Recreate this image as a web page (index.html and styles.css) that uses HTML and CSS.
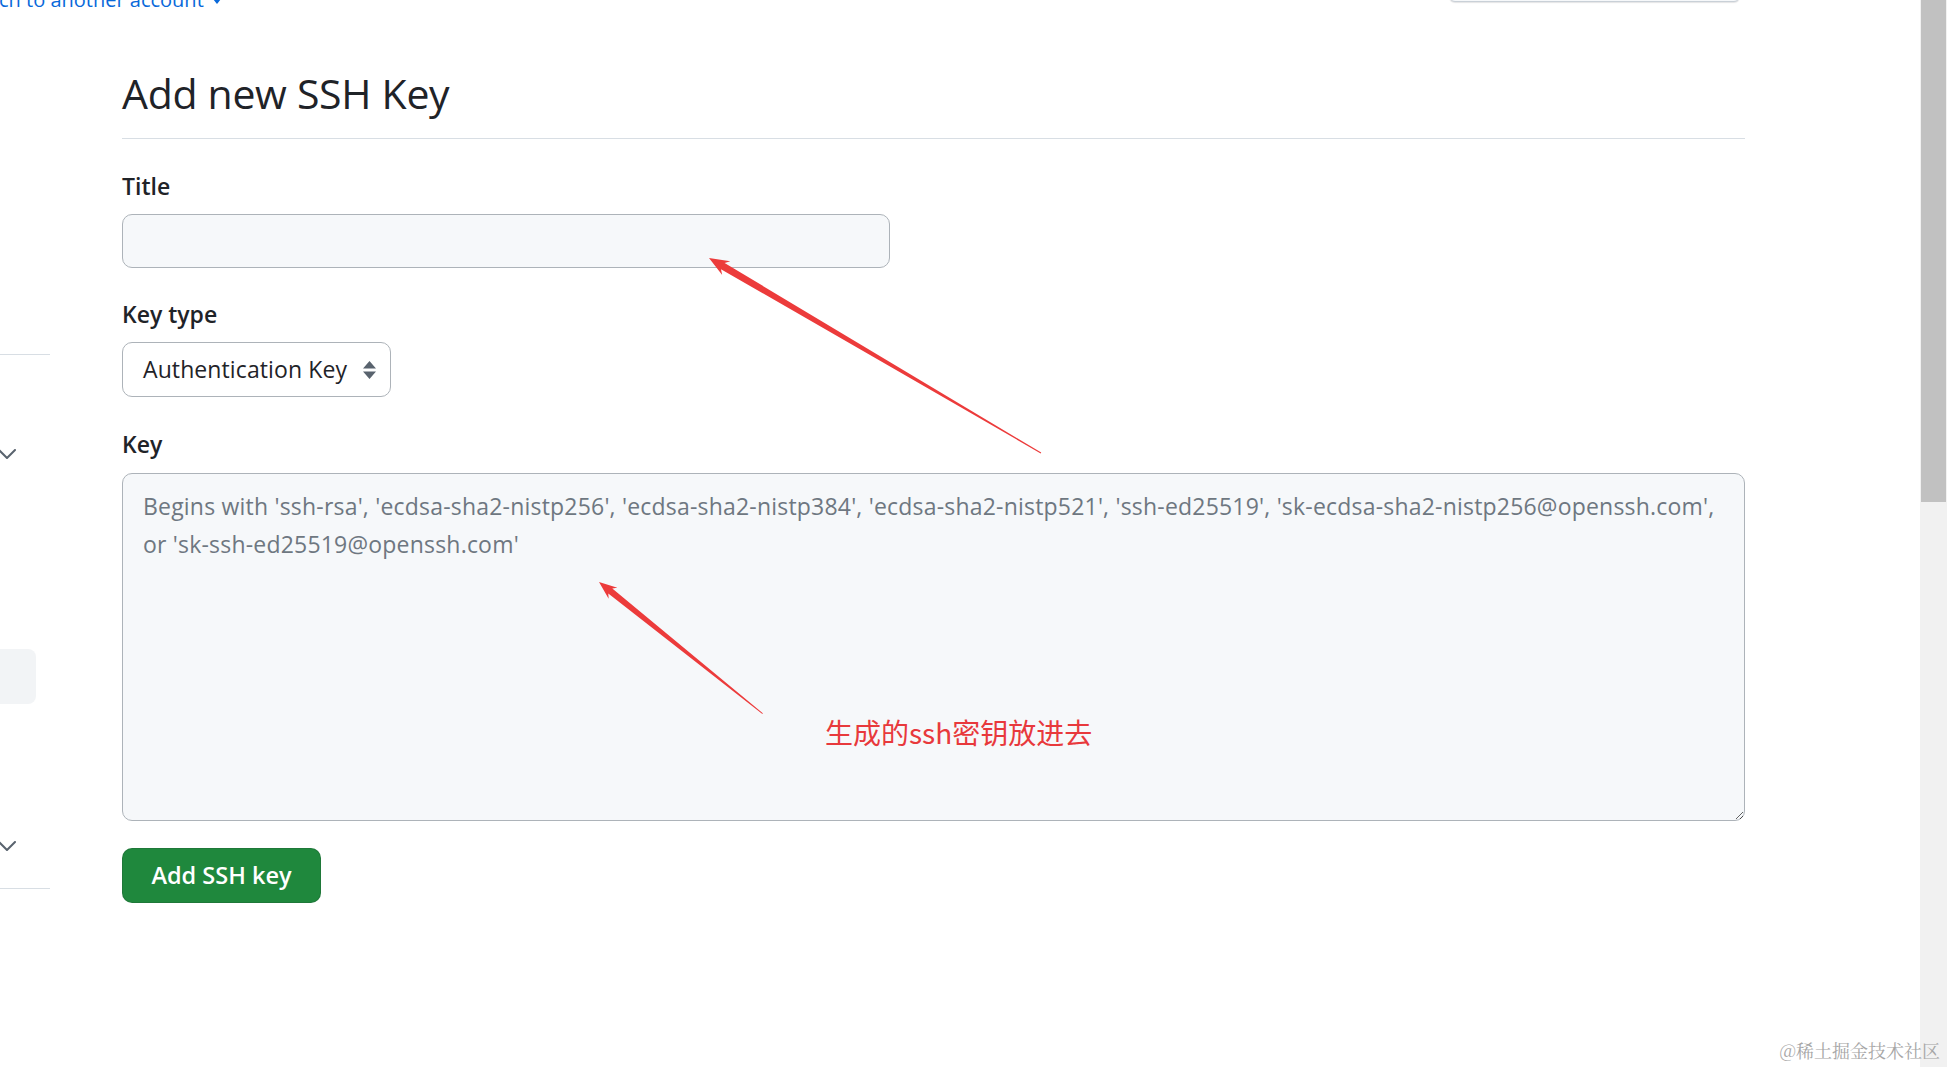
FILE: index.html
```html
<!DOCTYPE html>
<html lang="en">
<head>
<meta charset="utf-8">
<title>Add new SSH Key</title>
<link rel="stylesheet" href="styles.css">
</head>
<body>
<div class="viewport">
  <div class="page">
    <div class="topbar">
      <a class="account-switch" href="#">ch to another account<span class="caret"></span></a>
      <div class="profile-btn"></div>
    </div>
    <div class="layout">
      <aside class="sidebar">
        <div class="side-rule"></div>
        <svg class="side-chevron" width="18" height="10" viewBox="0 0 18 10"><polyline points="1,1 9,9 17,1" fill="none" stroke="#59636e" stroke-width="2" stroke-linecap="round" stroke-linejoin="round"/></svg>
        <div class="side-item"></div>
        <svg class="side-chevron second" width="18" height="10" viewBox="0 0 18 10"><polyline points="1,1 9,9 17,1" fill="none" stroke="#59636e" stroke-width="2" stroke-linecap="round" stroke-linejoin="round"/></svg>
        <div class="side-rule second"></div>
      </aside>
      <main class="main">
        <h2 class="subhead">Add new SSH Key</h2>
        <form class="ssh-form">
          <div class="form-group title-group">
            <label class="form-label" for="title">Title</label>
            <input class="form-control title-input" id="title" type="text">
          </div>
          <div class="form-group type-group">
            <label class="form-label">Key type</label>
            <div class="select">
              <span>Authentication Key</span>
              <svg width="15" height="18" viewBox="0 0 15 18"><path d="M7.5 0 L14 7.5 H1 Z M7.5 18 L14 10.5 H1 Z" fill="#59636e"/></svg>
            </div>
          </div>
          <div class="form-group key-group">
            <label class="form-label" for="key">Key</label>
            <textarea class="form-control key-input" id="key" placeholder="Begins with 'ssh-rsa', 'ecdsa-sha2-nistp256', 'ecdsa-sha2-nistp384', 'ecdsa-sha2-nistp521', 'ssh-ed25519', 'sk-ecdsa-sha2-nistp256@openssh.com',&#10;or 'sk-ssh-ed25519@openssh.com'"></textarea>
          </div>
          <button class="btn-primary" type="button">Add SSH key</button>
        </form>
      </main>
    </div>
  </div>
  <div class="scrollbar"><div class="scroll-thumb"></div></div>

  <svg class="annotations" width="1947" height="1067" viewBox="0 0 1947 1067">
    <g transform="translate(709 258) rotate(30.43)">
      <polygon points="0,0 20,-8 16,-3.6 385,-0.5 385,0.5 16,3.6 20,8" fill="#ec3b3b"/>
    </g>
    <g transform="translate(599 582) rotate(38.83)">
      <polygon points="0,0 18,-7 14.5,-3.2 210,-0.4 210,0.4 14.5,3.2 18,7" fill="#ec3b3b"/>
    </g>
  </svg>
  <div class="note">生成的ssh密钥放进去</div>
  <div class="watermark">@稀土掘金技术社区</div>
</div>
</body>
</html>
```

FILE: styles.css
```css
* {
  box-sizing: border-box;
}

html,
body {
  margin: 0;
  height: 100%;
}

body {
  font-family: "Segoe UI", "Open Sans", "Noto Sans", sans-serif;
  color: #1f2328;
  background: #ffffff;
  overflow: hidden;
}

.viewport {
  position: relative;
  display: flex;
  width: 1947px;
  height: 1067px;
  overflow: hidden;
}

.page {
  flex: 0 0 1920px;
  display: flex;
  flex-direction: column;
}

/* top strip (mostly scrolled away) */
.topbar {
  flex: none;
  height: 8px;
  display: flex;
  align-items: flex-end;
  justify-content: space-between;
  overflow: hidden;
}

.account-switch {
  font-size: 20px;
  line-height: 28px;
  color: #0969da;
  text-decoration: none;
  white-space: nowrap;
  margin-bottom: -6px;
  margin-left: -1px;
}

.caret {
  display: inline-block;
  width: 0;
  height: 0;
  margin-left: 9px;
  vertical-align: middle;
  border-top: 5px solid #0969da;
  border-left: 4px solid transparent;
  border-right: 4px solid transparent;
}

.profile-btn {
  width: 291px;
  height: 32px;
  margin-right: 180px;
  margin-bottom: 6px;
  border: 1px solid #c9d0d7;
  border-radius: 6px;
  background: #f6f8fa;
  box-shadow: 0 1px 1px rgba(31, 35, 40, 0.12);
}

.layout {
  flex: 1;
  display: flex;
}

/* left navigation (clipped) */
.sidebar {
  flex: none;
  width: 50px;
  display: flex;
  flex-direction: column;
}

.side-rule {
  height: 1px;
  background: #d8dee4;
  margin-top: 346px;
}

.side-rule.second {
  margin-top: 37px;
}

.side-chevron {
  display: block;
  margin-top: 94px;
  margin-left: -2px;
}

.side-chevron.second {
  margin-top: 137px;
}

.side-item {
  width: 36px;
  height: 55px;
  margin-top: 190px;
  background: #f2f4f6;
  border-radius: 0 8px 8px 0;
}

/* main column */
.main {
  flex: none;
  width: 1623px;
  margin-left: 72px;
}

.subhead {
  margin: 59px 0 0;
  padding-bottom: 19px;
  border-bottom: 1px solid #d8dee4;
  font-size: 41px;
  line-height: 52px;
  font-weight: 400;
  letter-spacing: -0.3px;
}

.form-group {
  display: flex;
  flex-direction: column;
  align-items: flex-start;
  margin-top: 30px;
}

.title-group {
  margin-top: 31px;
}

.key-group {
  margin-top: 31px;
}

.form-label {
  font-size: 23px;
  line-height: 32px;
  font-weight: 600;
}

.form-control {
  display: block;
  border: 1px solid #adb3b9;
  border-radius: 10px;
  background: #f6f8fa;
  font-family: inherit;
  font-size: 23px;
  color: #1f2328;
  outline: none;
}

.title-input {
  width: 768px;
  height: 54px;
  margin-top: 12px;
  padding: 0 18px;
}

.select {
  margin-top: 12px;
  width: 269px;
  height: 55px;
  padding: 0 13px 0 20px;
  display: flex;
  align-items: center;
  justify-content: space-between;
  border: 1px solid #adb3b9;
  border-radius: 10px;
  background: #ffffff;
  font-size: 23px;
  line-height: 31px;
  letter-spacing: 0.1px;
}

.key-input {
  margin-top: 13px;
  width: 1623px;
  height: 348px;
  padding: 13px 18px 13px 20px;
  line-height: 38px;
  letter-spacing: 0.2px;
  resize: vertical;
}

.key-input::placeholder {
  color: #6e7781;
  opacity: 1;
}

.btn-primary {
  display: block;
  margin-top: 27px;
  width: 199px;
  height: 55px;
  padding: 0;
  border: 1px solid rgba(31, 35, 40, 0.15);
  border-radius: 10px;
  background: #1f883d;
  color: #ffffff;
  font-family: inherit;
  font-size: 23.5px;
  font-weight: 600;
  line-height: 1;
}

/* fake scrollbar */
.scrollbar {
  flex: 0 0 27px;
  background: #f1f1f1;
}

.scroll-thumb {
  width: 25px;
  height: 502px;
  margin-left: 1px;
  background: #c1c1c1;
}

/* annotations over the screenshot */
.annotations {
  position: absolute;
  left: 0;
  top: 0;
  pointer-events: none;
}

.note {
  position: absolute;
  left: 825px;
  top: 715px;
  font-family: "Noto Sans CJK SC", sans-serif;
  font-size: 28px;
  line-height: 34px;
  color: #e8393c;
  white-space: nowrap;
}

.watermark {
  position: absolute;
  right: 7px;
  top: 1039px;
  font-family: "Noto Serif CJK SC", "Noto Sans CJK SC", serif;
  font-size: 18px;
  line-height: 22px;
  color: #a6a6a6;
  white-space: nowrap;
}
```
